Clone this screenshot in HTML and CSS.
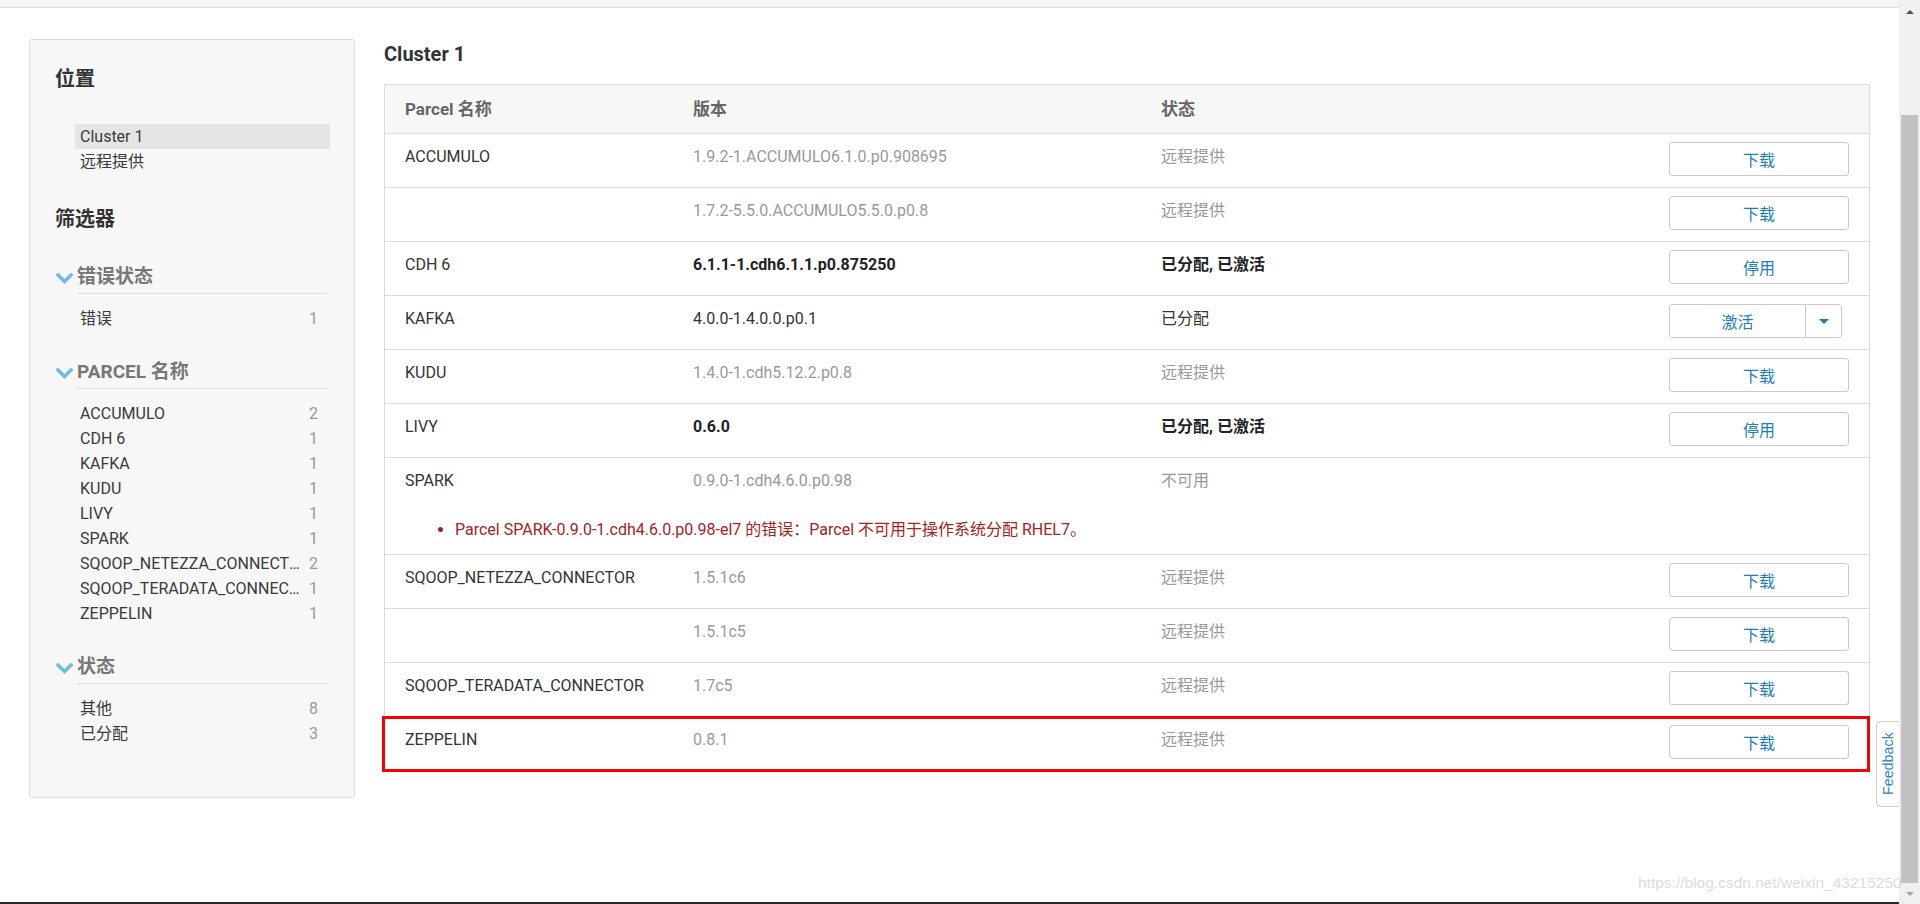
FILE: index.html
```html
<!DOCTYPE html>
<html lang="zh-CN">
<head>
<meta charset="utf-8">
<title>Parcels</title>
<link rel="stylesheet" href="styles.css">
</head>
<body>
<div class="page">
  <div class="topbar"></div>
  <div class="main">
    <aside class="sidebar">
      <h2 class="side-title">位置</h2>
      <ul class="nav">
        <li class="nav-item active">Cluster 1</li>
        <li class="nav-item">远程提供</li>
      </ul>
      <h2 class="side-title filters">筛选器</h2>

      <div class="group first">
        <div class="group-head">
          <svg class="chev" width="17" height="11" viewBox="0 0 17 11"><polyline points="2,2 8.5,8.5 15,2" fill="none" stroke="#6cbde3" stroke-width="3.4" stroke-linecap="square"/></svg>
          <div class="group-label">错误状态</div>
        </div>
        <ul class="group-items">
          <li class="fitem"><span class="fname">错误</span><span class="fcount">1</span></li>
        </ul>
      </div>

      <div class="group">
        <div class="group-head">
          <svg class="chev" width="17" height="11" viewBox="0 0 17 11"><polyline points="2,2 8.5,8.5 15,2" fill="none" stroke="#6cbde3" stroke-width="3.4" stroke-linecap="square"/></svg>
          <div class="group-label">PARCEL 名称</div>
        </div>
        <ul class="group-items">
          <li class="fitem"><span class="fname">ACCUMULO</span><span class="fcount">2</span></li>
          <li class="fitem"><span class="fname">CDH 6</span><span class="fcount">1</span></li>
          <li class="fitem"><span class="fname">KAFKA</span><span class="fcount">1</span></li>
          <li class="fitem"><span class="fname">KUDU</span><span class="fcount">1</span></li>
          <li class="fitem"><span class="fname">LIVY</span><span class="fcount">1</span></li>
          <li class="fitem"><span class="fname">SPARK</span><span class="fcount">1</span></li>
          <li class="fitem"><span class="fname">SQOOP_NETEZZA_CONNECTOR</span><span class="fcount">2</span></li>
          <li class="fitem"><span class="fname">SQOOP_TERADATA_CONNECTOR</span><span class="fcount">1</span></li>
          <li class="fitem"><span class="fname">ZEPPELIN</span><span class="fcount">1</span></li>
        </ul>
      </div>

      <div class="group">
        <div class="group-head">
          <svg class="chev" width="17" height="11" viewBox="0 0 17 11"><polyline points="2,2 8.5,8.5 15,2" fill="none" stroke="#6cbde3" stroke-width="3.4" stroke-linecap="square"/></svg>
          <div class="group-label">状态</div>
        </div>
        <ul class="group-items">
          <li class="fitem"><span class="fname">其他</span><span class="fcount">8</span></li>
          <li class="fitem"><span class="fname">已分配</span><span class="fcount">3</span></li>
        </ul>
      </div>
    </aside>

    <section class="content">
      <h1 class="cluster-title">Cluster 1</h1>
      <div class="ptable">
        <div class="row thead">
          <div class="cell">Parcel 名称</div>
          <div class="cell">版本</div>
          <div class="cell">状态</div>
          <div class="cell"></div>
        </div>

        <div class="row">
          <div class="cell name">ACCUMULO</div>
          <div class="cell muted">1.9.2-1.ACCUMULO6.1.0.p0.908695</div>
          <div class="cell muted">远程提供</div>
          <div class="btn-cell"><button class="btn">下载</button></div>
        </div>
        <div class="row">
          <div class="cell name"></div>
          <div class="cell muted">1.7.2-5.5.0.ACCUMULO5.5.0.p0.8</div>
          <div class="cell muted">远程提供</div>
          <div class="btn-cell"><button class="btn">下载</button></div>
        </div>
        <div class="row">
          <div class="cell name">CDH 6</div>
          <div class="cell strong">6.1.1-1.cdh6.1.1.p0.875250</div>
          <div class="cell strong">已分配, 已激活</div>
          <div class="btn-cell"><button class="btn">停用</button></div>
        </div>
        <div class="row">
          <div class="cell name">KAFKA</div>
          <div class="cell dark">4.0.0-1.4.0.0.p0.1</div>
          <div class="cell dark">已分配</div>
          <div class="btn-cell">
            <div class="btn-group">
              <button class="btn-main">激活</button>
              <button class="btn-caret"><span class="caret"></span></button>
            </div>
          </div>
        </div>
        <div class="row">
          <div class="cell name">KUDU</div>
          <div class="cell muted">1.4.0-1.cdh5.12.2.p0.8</div>
          <div class="cell muted">远程提供</div>
          <div class="btn-cell"><button class="btn">下载</button></div>
        </div>
        <div class="row">
          <div class="cell name">LIVY</div>
          <div class="cell strong">0.6.0</div>
          <div class="cell strong">已分配, 已激活</div>
          <div class="btn-cell"><button class="btn">停用</button></div>
        </div>
        <div class="row">
          <div class="cell name">SPARK</div>
          <div class="cell muted">0.9.0-1.cdh4.6.0.p0.98</div>
          <div class="cell muted">不可用</div>
          <div class="btn-cell"></div>
          <ul class="error-list">
            <li>Parcel SPARK-0.9.0-1.cdh4.6.0.p0.98-el7 的错误：Parcel 不可用于操作系统分配 RHEL7。</li>
          </ul>
        </div>
        <div class="row">
          <div class="cell name">SQOOP_NETEZZA_CONNECTOR</div>
          <div class="cell muted">1.5.1c6</div>
          <div class="cell muted">远程提供</div>
          <div class="btn-cell"><button class="btn">下载</button></div>
        </div>
        <div class="row">
          <div class="cell name"></div>
          <div class="cell muted">1.5.1c5</div>
          <div class="cell muted">远程提供</div>
          <div class="btn-cell"><button class="btn">下载</button></div>
        </div>
        <div class="row">
          <div class="cell name">SQOOP_TERADATA_CONNECTOR</div>
          <div class="cell muted">1.7c5</div>
          <div class="cell muted">远程提供</div>
          <div class="btn-cell"><button class="btn">下载</button></div>
        </div>
        <div class="row marked">
          <div class="cell name">ZEPPELIN</div>
          <div class="cell muted">0.8.1</div>
          <div class="cell muted">远程提供</div>
          <div class="btn-cell"><button class="btn">下载</button></div>
        </div>
      </div>
    </section>
  </div>
  <div class="bottomline"></div>
  <div class="feedback"><span>Feedback</span></div>
</div>
<div class="scrollbar">
  <div class="sb-up"><span class="tri-up"></span></div>
  <div class="sb-gap"></div>
  <div class="sb-thumb"></div>
  <div class="sb-down"><span class="tri-down"></span></div>
</div>
<div class="watermark">https://blog.csdn.net/weixin_43215250</div>
</body>
</html>
```

FILE: styles.css
```css
* { box-sizing: border-box; }
html, body { margin: 0; padding: 0; }
body {
  width: 1920px;
  height: 904px;
  overflow: hidden;
  display: flex;
  position: relative;
  font-family: Roboto, "Noto Sans CJK SC", sans-serif;
  font-size: 16px;
  color: #333;
  background: #fff;
}
ul { list-style: none; margin: 0; padding: 0; }
h1, h2 { margin: 0; }
button { font-family: inherit; cursor: pointer; }

.page {
  flex: 1;
  min-width: 0;
  display: flex;
  flex-direction: column;
  position: relative;
}
.topbar {
  height: 8px;
  background: #f5f5f5;
  border-bottom: 1px solid #dcdcdc;
}
.main {
  flex: 1;
  display: flex;
  gap: 29px;
  padding: 31px 29px 0;
}
.bottomline { height: 2px; background: #2b2b2b; }

/* sidebar */
.sidebar {
  flex: none;
  width: 326px;
  height: 759px;
  background: #f7f7f7;
  border: 1px solid #dcdcdc;
  border-radius: 3px;
  padding: 25px 24px 0 25px;
}
.side-title {
  font-size: 20px;
  font-weight: 700;
  line-height: 28px;
  color: #333;
}
.side-title.filters { margin-top: 31px; }
.nav { margin: 31px 0 0 20px; }
.nav-item {
  height: 25px;
  line-height: 25px;
  padding: 0 5px;
  color: #3a3a3a;
}
.nav-item.active { background: #e5e5e5; }

.group { margin-top: 28px; }
.group.first { margin-top: 31px; }
.group-head { display: flex; align-items: flex-start; }
.chev { flex: none; margin: 9px 4px 0 1px; }
.group-label {
  flex: 1;
  margin-right: 3px;
  font-size: 19px;
  font-weight: 700;
  line-height: 26px;
  color: #777;
  padding-bottom: 3px;
  border-bottom: 1px solid #dcdcdc;
}
.group-items { margin: 12px 0 0 20px; }
.fitem {
  display: flex;
  height: 25px;
  line-height: 25px;
  padding: 0 12px 0 5px;
  color: #3a3a3a;
}
.fname {
  flex: 1;
  min-width: 0;
  white-space: nowrap;
  overflow: hidden;
  text-overflow: ellipsis;
}
.fcount { flex: none; margin-left: 8px; color: #999; }

/* content */
.content { flex: 1; min-width: 0; }
.cluster-title {
  margin: 1px 0 16px;
  font-size: 20px;
  font-weight: 700;
  line-height: 28px;
  color: #333;
}
.ptable { border: 1px solid #dcdcdc; }
.row {
  display: grid;
  grid-template-columns: 288px 468px 1fr 201px;
  border-top: 1px solid #dcdcdc;
  position: relative;
}
.row.thead {
  border-top: 0;
  height: 48px;
  background: #f7f7f7;
  font-weight: 700;
  font-size: 17px;
  color: #666;
}
.row.thead .cell { padding-top: 14px; }
.cell {
  padding: 13px 20px 0;
  line-height: 20px;
  white-space: nowrap;
}
.cell.name { color: #333; }
.cell.muted { color: #999; }
.cell.strong { color: #222; font-weight: 700; }
.cell.dark { color: #333; }
.btn-cell {
  display: flex;
  justify-content: flex-end;
  padding: 8px 20px 11px 0;
}
.btn {
  width: 180px;
  height: 34px;
  border: 1px solid #cbcbcb;
  border-radius: 3px;
  background: #fff;
  color: #1f7db8;
  font-size: 16px;
  padding: 0;
}
.btn-group {
  display: flex;
  width: 173px;
  height: 34px;
  margin-right: 7px;
  border: 1px solid #cbcbcb;
  border-radius: 3px;
  background: #fff;
  overflow: hidden;
}
.btn-main {
  flex: 1;
  border: 0;
  background: #fff;
  color: #1f7db8;
  font-size: 16px;
  padding: 0;
}
.btn-caret {
  width: 36px;
  border: 0;
  border-left: 1px solid #cbcbcb;
  background: #fff;
  padding: 0;
  display: flex;
  align-items: center;
  justify-content: center;
}
.caret {
  width: 0;
  height: 0;
  border-left: 5px solid transparent;
  border-right: 5px solid transparent;
  border-top: 5px solid #1f7db8;
}
.error-list {
  grid-column: 1 / -1;
  margin: 29px 0 14px;
  padding-left: 70px;
  list-style: disc;
  color: #a3231f;
  line-height: 20px;
}
.row.marked::after {
  content: "";
  position: absolute;
  left: -3px;
  right: -1px;
  top: -1px;
  bottom: -2px;
  border: 3px solid #f40000;
  pointer-events: none;
}

/* feedback tab */
.feedback {
  position: absolute;
  right: 0;
  top: 721px;
  width: 23px;
  height: 86px;
  background: #fff;
  border: 1px solid #d0d0d0;
  border-right: 0;
  border-radius: 4px 0 0 4px;
  display: flex;
  align-items: center;
  justify-content: center;
}
.feedback span {
  writing-mode: vertical-rl;
  transform: rotate(180deg);
  font-family: "Liberation Sans", Arial, sans-serif;
  font-size: 14px;
  color: #2a86c1;
  letter-spacing: 0.2px;
}

/* scrollbar */
.scrollbar {
  flex: none;
  width: 21px;
  background: #f0f0f0;
  display: flex;
  flex-direction: column;
  align-items: center;
}
.sb-up { height: 24px; display: flex; align-items: center; justify-content: center; }
.tri-up {
  width: 0; height: 0;
  border-left: 4px solid transparent;
  border-right: 4px solid transparent;
  border-bottom: 4px solid #505050;
}
.sb-gap { height: 91px; }
.sb-thumb { width: 17px; height: 768px; background: #c1c1c1; }
.sb-down { flex: 1; display: flex; align-items: center; justify-content: center; }
.tri-down {
  width: 0; height: 0;
  border-left: 4px solid transparent;
  border-right: 4px solid transparent;
  border-top: 4px solid #a3a3a3;
}

.watermark {
  position: absolute;
  left: 1638px;
  top: 874px;
  font-family: "Liberation Sans", Arial, sans-serif;
  font-size: 15.5px;
  color: rgba(190, 190, 190, 0.55);
  white-space: nowrap;
  pointer-events: none;
}
```
